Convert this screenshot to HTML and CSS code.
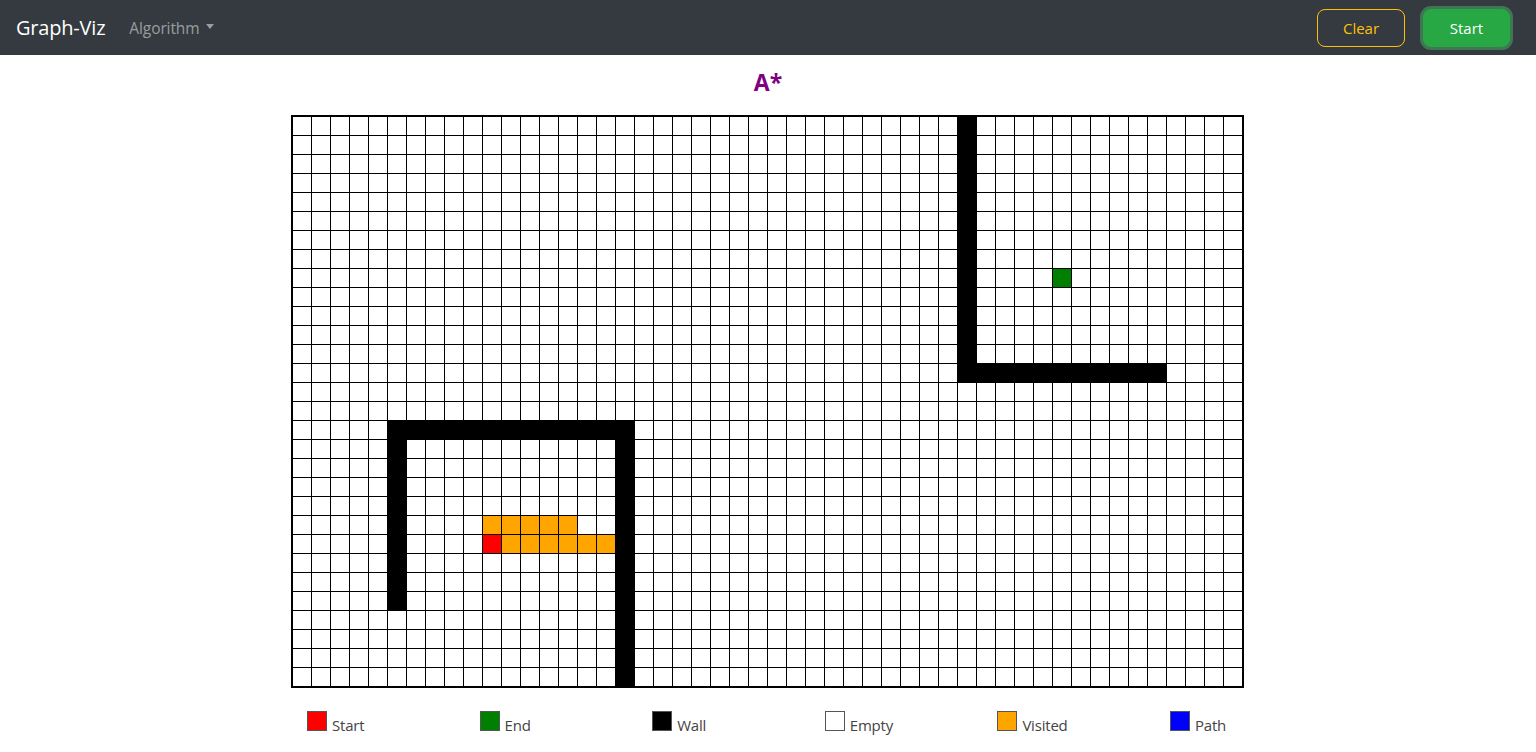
FILE: index.html
```html
<!DOCTYPE html>
<html lang="en">
<head>
<meta charset="utf-8">
<title>Graph-Viz</title>
<link rel="stylesheet" href="styles.css">
</head>
<body>
<nav class="navbar">
  <div class="nav-left">
    <a class="brand" href="#">Graph-Viz</a>
    <a class="nav-link dropdown" href="#">Algorithm<span class="caret"></span></a>
  </div>
  <div class="nav-right">
    <button class="btn btn-clear">Clear</button>
    <button class="btn btn-start">Start</button>
  </div>
</nav>
<main class="main">
  <h1 class="title">A*</h1>
  <div class="board" id="board"></div>
  <div class="legend">
    <div class="legend-item"><span class="swatch start"></span><span class="label">Start</span></div>
    <div class="legend-item"><span class="swatch end"></span><span class="label">End</span></div>
    <div class="legend-item"><span class="swatch wall"></span><span class="label">Wall</span></div>
    <div class="legend-item"><span class="swatch empty"></span><span class="label">Empty</span></div>
    <div class="legend-item"><span class="swatch visited"></span><span class="label">Visited</span></div>
    <div class="legend-item"><span class="swatch path"></span><span class="label">Path</span></div>
  </div>
</main>
<script src="script.js"></script>
</body>
</html>
```
FILE: styles.css
```css
* { box-sizing: border-box; }
html, body { margin: 0; padding: 0; }
body {
  font-family: "Open Sans", "Noto Sans", Arial, sans-serif;
  background: #fff;
  color: #212529;
  min-height: 100vh;
}
.navbar {
  height: 55px;
  background: #343a40;
  display: flex;
  align-items: center;
  justify-content: space-between;
  padding: 0 26px 0 16px;
}
.nav-left { display: flex; align-items: center; }
.brand {
  color: #fff;
  text-decoration: none;
  font-size: 20px;
  letter-spacing: -0.2px;
  margin-right: 24px;
}
.nav-link {
  color: rgba(255,255,255,0.5);
  text-decoration: none;
  font-size: 15.5px;
  letter-spacing: -0.1px;
  display: flex;
  align-items: center;
}
.caret {
  display: inline-block;
  margin-left: 6px;
  border-top: 5px solid rgba(255,255,255,0.5);
  border-left: 4.5px solid transparent;
  border-right: 4.5px solid transparent;
  margin-top: -2px;
}
.nav-right { display: flex; align-items: center; gap: 18px; }
.btn {
  font-family: inherit;
  font-size: 15px;
  height: 38px;
  border-radius: 8px;
  padding: 0;
  cursor: pointer;
}
.btn-clear {
  width: 88px;
  background: transparent;
  color: #ffc107;
  border: 1px solid #ffc107;
}
.btn-start {
  width: 87px;
  background: #28a745;
  color: #fff;
  border: 1px solid #28a745;
  box-shadow: 0 0 0 3px rgba(72,180,97,0.5);
}
.main {
  display: flex;
  flex-direction: column;
  align-items: center;
  padding-bottom: 20px;
}
.title {
  margin: 12px 0 0;
  height: 48px;
  font-size: 23px;
  font-weight: 700;
  color: #800080;
  line-height: 30px;
}
.board {
  display: grid;
  grid-template-columns: repeat(50, 18px);
  grid-auto-rows: 18px;
  gap: 1px;
  background: #000;
  border: 2px solid #000;
  margin-right: 1px;
}
.cell { background: #fff; }
.cell.wall { background: #000; }
.cell.start { background: #ff0000; }
.cell.end { background: #008000; }
.cell.visited { background: #ffa500; }
.cell.path { background: #0000ff; }
.legend {
  width: 954px;
  display: grid;
  grid-template-columns: repeat(6, 172.6px);
  padding-left: 16px;
  margin-top: 23px;
}
.legend-item { display: flex; align-items: baseline; }
.swatch {
  width: 20px;
  height: 20px;
  border: 1px solid #555;
  margin-right: 5px;
}
.swatch.start { background: #ff0000; }
.swatch.end { background: #008000; }
.swatch.wall { background: #000; }
.swatch.empty { background: #fff; }
.swatch.visited { background: #ffa500; }
.swatch.path { background: #0000ff; }
.label {
  font-size: 15px;
  color: #444;
  line-height: 18px;
  letter-spacing: -0.2px;
}
```
FILE: script.js
```js
(function () {
  var COLS = 50, ROWS = 30;
  var board = document.getElementById('board');
  var types = {};
  function set(r, c, t) { types[r + ',' + c] = t; }
  var r, c;
  // bottom-left wall
  for (c = 5; c <= 17; c++) set(16, c, 'wall');
  for (r = 16; r <= 25; r++) set(r, 5, 'wall');
  for (r = 16; r <= 29; r++) set(r, 17, 'wall');
  // top-right wall
  for (r = 0; r <= 13; r++) set(r, 35, 'wall');
  for (c = 35; c <= 45; c++) set(13, c, 'wall');
  // visited
  for (c = 10; c <= 14; c++) set(21, c, 'visited');
  for (c = 11; c <= 16; c++) set(22, c, 'visited');
  set(22, 10, 'start');
  set(8, 40, 'end');
  var frag = document.createDocumentFragment();
  for (r = 0; r < ROWS; r++) {
    for (c = 0; c < COLS; c++) {
      var d = document.createElement('div');
      d.className = 'cell' + (types[r + ',' + c] ? ' ' + types[r + ',' + c] : '');
      frag.appendChild(d);
    }
  }
  board.appendChild(frag);
})();
```
